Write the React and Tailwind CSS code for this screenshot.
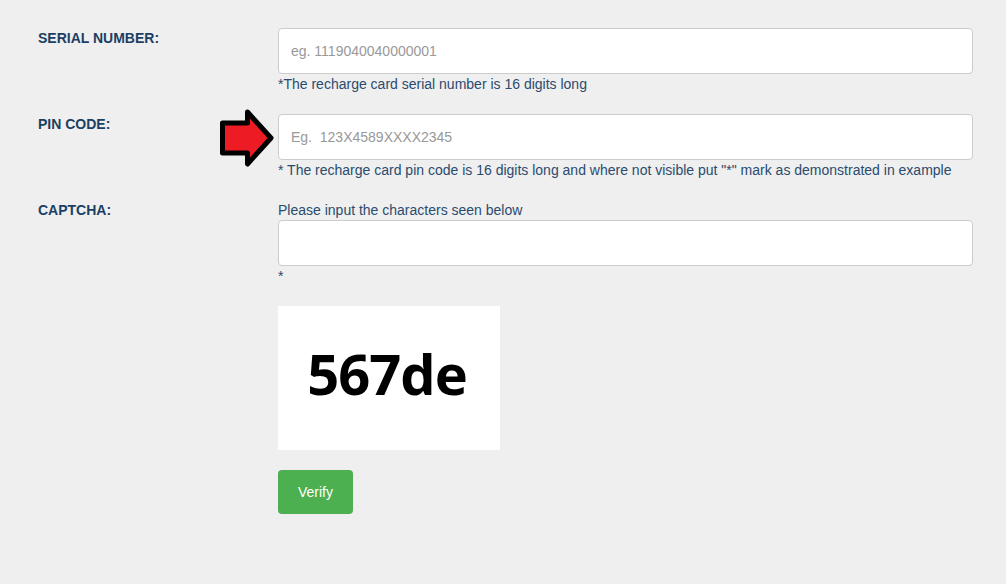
import React from 'react';

const Arrow = () => (
  <svg width="64" height="64" viewBox="0 0 64 64" className="absolute left-[-62px] top-[-8px]">
    <polygon
      points="6.5,17 31.5,17 31.5,6 55,32 31.5,58 31.5,47 6.5,47"
      fill="#ed1c24"
      stroke="#000"
      strokeWidth="5"
      strokeLinejoin="round"
    />
  </svg>
);

const Row = ({ label, children }) => (
  <div className="flex">
    <div className="w-[240px] shrink-0 text-[14px] leading-[21px] font-bold text-[#1b3f62]">
      {label}
    </div>
    <div className="w-[695px] relative">{children}</div>
  </div>
);

const inputCls =
  'block w-full h-[46px] rounded-[4px] border border-[#cccccc] bg-white px-3 text-[14px] text-[#555] placeholder:text-[#999] outline-none';

const App = () => {
  return (
    <div
      className="min-h-[584px] bg-[#efefef] pl-[38px] pt-[28px] text-[#2a4b6e]"
      style={{ fontFamily: '"Liberation Sans", Arial, sans-serif' }}
    >
      <div className="flex flex-col gap-[20px]">
        <Row label="SERIAL NUMBER:">
          <input className={inputCls} placeholder="eg. 1119040040000001" />
          <p className="text-[14px] leading-[20px]">
            *The recharge card serial number is 16 digits long
          </p>
        </Row>
        <Row label="PIN CODE:">
          <Arrow />
          <input className={inputCls} placeholder="Eg.  123X4589XXXX2345" />
          <p className="text-[14px] leading-[20px] whitespace-nowrap">
            * The recharge card pin code is 16 digits long and where not visible put "*" mark as demonstrated in example
          </p>
        </Row>
        <Row label="CAPTCHA:">
          <p className="text-[14px] leading-[20px]">Please input the characters seen below</p>
          <input className={inputCls} />
          <p className="text-[14px] leading-[20px]">*</p>
          <div className="mt-[20px] w-[222px] h-[144px] bg-white flex items-center justify-center pb-[10px] pr-[4px]">
            <span
              className="text-[56px] font-bold text-black tracking-[-1px]"
              style={{ fontFamily: '"Open Sans", "Noto Sans", sans-serif' }}
            >
              567de
            </span>
          </div>
          <button className="mt-[20px] w-[75px] h-[44px] rounded-[4px] bg-[#4caf50] text-white text-[14px]">
            Verify
          </button>
        </Row>
      </div>
    </div>
  );
};

export default App;
